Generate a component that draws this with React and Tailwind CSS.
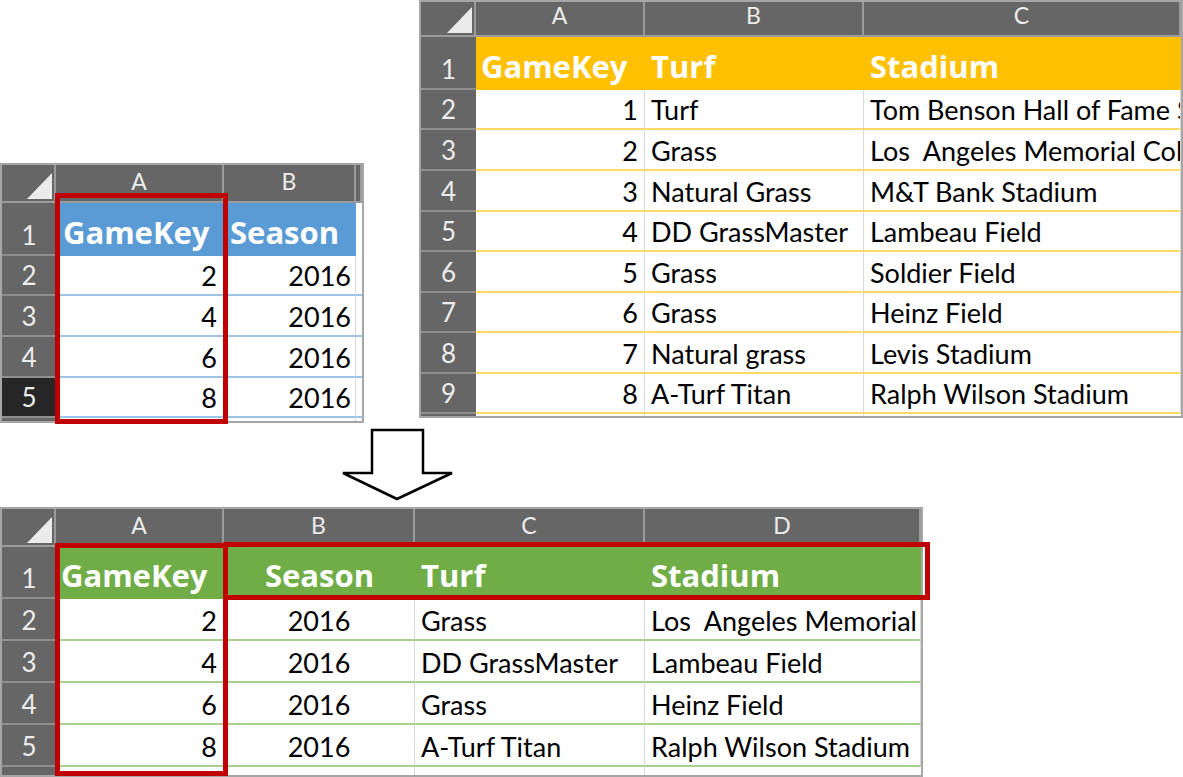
import React from "react";

const hdrText = "font-['Open_Sans',sans-serif] font-bold text-[31px] leading-none text-white";
const dataText = "font-['Lato',sans-serif] text-[27px] leading-none text-black";
const greyText = "font-['Lato',sans-serif] leading-none text-[#ececec]";

function Sheet({ pos, grid, children }) {
  return (
    <div className={`absolute border-2 border-[#a6a6a6] bg-white overflow-hidden ${pos}`}>
      <div className={`grid h-full w-full ${grid}`}>{children}</div>
    </div>
  );
}

function Corner() {
  return (
    <div className="relative bg-[#666666] border-r-2 border-b-2 border-[#9b9b9b]">
      <svg className="absolute right-[2px] bottom-[2px]" width="25" height="26" viewBox="0 0 25 26">
        <polygon points="25,0 25,26 0,26" fill="#ebebeb" />
      </svg>
    </div>
  );
}

function ColHdr({ children }) {
  return (
    <div className={`flex items-end justify-center pb-[8px] bg-[#666666] border-r-2 border-b-2 border-[#9b9b9b] text-[23px] ${greyText}`}>
      {children}
    </div>
  );
}

function RowHdr({ children, dark }) {
  return (
    <div
      className={`flex items-end justify-center pb-[6px] border-b-2 border-[#8f8f8f] text-[26px] ${greyText} ${
        dark ? "bg-[#262626]" : "bg-[#666666]"
      }`}
    >
      {children}
    </div>
  );
}

function Head({ children, bg, align = "justify-start", pad = "pl-[6px]" }) {
  return (
    <div className={`flex items-end pb-[8px] overflow-hidden whitespace-pre ${bg} ${align} ${pad} ${hdrText}`}>
      {children}
    </div>
  );
}

function Data({ children, line, align = "justify-start", pad = "pl-[6px]" }) {
  return (
    <div
      className={`flex items-end pb-[5px] overflow-hidden whitespace-pre border-b-2 border-r ${line} border-r-[#d9d9d9] ${align} ${pad} ${dataText}`}
    >
      {children}
    </div>
  );
}

function Table1() {
  const line = "border-[#9dc3e6]";
  const rows = [
    ["2", "2", "2016"],
    ["3", "4", "2016"],
    ["4", "6", "2016"],
    ["5", "8", "2016"],
  ];
  return (
    <Sheet
      pos="left-0 top-[163px] w-[364px] h-[260px]"
      grid="grid-cols-[54px_168px_132px_6px] grid-rows-[38px_53px_40px_41px_41px_40px_3px]"
    >
      <Corner />
      <ColHdr>A</ColHdr>
      <ColHdr>B</ColHdr>
      <ColHdr></ColHdr>
      <RowHdr>1</RowHdr>
      <Head bg="bg-[#5b9bd5]" pad="pl-[7px]">GameKey</Head>
      <Head bg="bg-[#5b9bd5]">Season</Head>
      <div className="bg-white" />
      {rows.map((r) => (
        <React.Fragment key={r[0]}>
          <RowHdr dark={r[0] === "5"}>{r[0]}</RowHdr>
          <Data line={line} align="justify-end" pad="pr-[6px]">{r[1]}</Data>
          <Data line={line} align="justify-end" pad="pr-[4px]">{r[2]}</Data>
          <Data line={line}></Data>
        </React.Fragment>
      ))}
      <div className="bg-[#666666]" />
      <div className="border-r border-[#d9d9d9]" />
      <div className="border-r border-[#d9d9d9]" />
      <div />
    </Sheet>
  );
}

function Table2() {
  const line = "border-[#ffd966]";
  const rows = [
    ["2", "1", "Turf", "Tom Benson Hall of Fame Stadium"],
    ["3", "2", "Grass", "Los  Angeles Memorial Coliseum"],
    ["4", "3", "Natural Grass", "M&T Bank Stadium"],
    ["5", "4", "DD GrassMaster", "Lambeau Field"],
    ["6", "5", "Grass", "Soldier Field"],
    ["7", "6", "Grass", "Heinz Field"],
    ["8", "7", "Natural grass", "Levis Stadium"],
    ["9", "8", "A-Turf Titan", "Ralph Wilson Stadium"],
  ];
  return (
    <Sheet
      pos="left-[419px] top-0 w-[764px] h-[418px]"
      grid="grid-cols-[55px_169px_219px_317px] grid-rows-[35px_53px_40px_41px_41px_40px_41px_40px_41px_40px_2px]"
    >
      <Corner />
      <ColHdr>A</ColHdr>
      <ColHdr>B</ColHdr>
      <ColHdr>C</ColHdr>
      <RowHdr>1</RowHdr>
      <Head bg="bg-[#ffc000]" pad="pl-[5px]">GameKey</Head>
      <Head bg="bg-[#ffc000]">Turf</Head>
      <Head bg="bg-[#ffc000]">Stadium</Head>
      {rows.map((r) => (
        <React.Fragment key={r[0]}>
          <RowHdr>{r[0]}</RowHdr>
          <Data line={line} align="justify-end" pad="pr-[6px]">{r[1]}</Data>
          <Data line={line}>{r[2]}</Data>
          <Data line={line}>{r[3]}</Data>
        </React.Fragment>
      ))}
      <div className="bg-[#666666]" />
      <div className="border-r border-[#d9d9d9]" />
      <div className="border-r border-[#d9d9d9]" />
      <div />
    </Sheet>
  );
}

function Table3() {
  const line = "border-[#a9d08e]";
  const rows = [
    ["2", "2", "2016", "Grass", "Los  Angeles Memorial"],
    ["3", "4", "2016", "DD GrassMaster", "Lambeau Field"],
    ["4", "6", "2016", "Grass", "Heinz Field"],
    ["5", "8", "2016", "A-Turf Titan", "Ralph Wilson Stadium"],
  ];
  return (
    <Sheet
      pos="left-0 top-[507px] w-[923px] h-[270px]"
      grid="grid-cols-[54px_168px_191px_230px_276px] grid-rows-[38px_52px_42px_42px_42px_42px_8px]"
    >
      <Corner />
      <ColHdr>A</ColHdr>
      <ColHdr>B</ColHdr>
      <ColHdr>C</ColHdr>
      <ColHdr>D</ColHdr>
      <RowHdr>1</RowHdr>
      <Head bg="bg-[#70ad47]" pad="pl-[5px]">GameKey</Head>
      <Head bg="bg-[#70ad47]" align="justify-center" pad="pl-0">Season</Head>
      <Head bg="bg-[#70ad47]">Turf</Head>
      <Head bg="bg-[#70ad47]">Stadium</Head>
      {rows.map((r) => (
        <React.Fragment key={r[0]}>
          <RowHdr>{r[0]}</RowHdr>
          <Data line={line} align="justify-end" pad="pr-[6px]">{r[1]}</Data>
          <Data line={line} align="justify-center" pad="pl-0">{r[2]}</Data>
          <Data line={line}>{r[3]}</Data>
          <Data line={line}>{r[4]}</Data>
        </React.Fragment>
      ))}
      <div className="bg-[#666666]" />
      <div className="border-r border-[#d9d9d9]" />
      <div className="border-r border-[#d9d9d9]" />
      <div className="border-r border-[#d9d9d9]" />
      <div />
    </Sheet>
  );
}

function Arrow() {
  return (
    <svg className="absolute left-[340px] top-[428px]" width="116" height="74" viewBox="0 0 116 74">
      <polygon
        points="32,2 83,2 83,45 112,45 57,71 3,45 32,45"
        fill="white"
        stroke="black"
        strokeWidth="2.5"
      />
    </svg>
  );
}

export default function App() {
  return (
    <div className="relative w-[1183px] h-[777px] bg-white overflow-hidden">
      <Table2 />
      <Table1 />
      <Table3 />
      <Arrow />
      <div className="absolute left-[55px] top-[193px] w-[173px] h-[231px] border-[5px] border-[#c00000]" />
      <div className="absolute left-[55px] top-[543px] w-[173px] h-[233px] border-[5px] border-[#c00000]" />
      <div className="absolute left-[223px] top-[542px] w-[707px] h-[58px] border-[5px] border-[#c00000]" />
    </div>
  );
}
